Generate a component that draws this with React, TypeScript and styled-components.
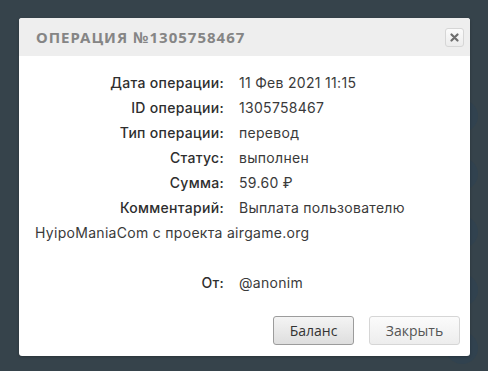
import React from 'react'
import styled, { createGlobalStyle } from 'styled-components'

const GlobalStyle = createGlobalStyle`
  html, body {
    margin: 0;
    padding: 0;
    background: #36434b;
  }
  body {
    width: 488px;
    height: 371px;
    overflow: hidden;
    font-family: Inter, 'Noto Sans', sans-serif;
  }
`

const Screen = styled.div`
  position: relative;
  width: 488px;
  height: 371px;
  padding: 18px 0 0 19px;
  box-sizing: border-box;
`

// faint page content behind the overlay
const Dots = styled.div`
  position: absolute;
  left: 446px;
  top: 100px;
  display: flex;
  flex-direction: column;
  gap: 26px;
`

const Dot = styled.div`
  width: 32px;
  height: 32px;
  border-radius: 50%;
  background: #31424f;
`

const Dialog = styled.div`
  position: relative;
  width: 451px;
  height: 338px;
  background: #ffffff;
  border-radius: 3px;
  overflow: hidden;
  display: flex;
  flex-direction: column;
  box-shadow: 0 1px 3px rgba(0, 0, 0, 0.25);
`

const Header = styled.div`
  height: 38px;
  background: #eeeeee;
  display: flex;
  align-items: center;
  justify-content: space-between;
  padding: 0 6px 0 17px;
`

const Title = styled.h2`
  margin: 0;
  font-family: 'Noto Sans', 'DejaVu Sans', sans-serif;
  font-size: 15px;
  font-weight: 700;
  letter-spacing: 1px;
  color: #858585;
`

const CloseButton = styled.button`
  width: 19px;
  height: 19px;
  padding: 0;
  border: 1px solid #d6d6d6;
  border-radius: 3px;
  background: linear-gradient(#fbfbfb, #ececec);
  display: flex;
  align-items: center;
  justify-content: center;
`

const Body = styled.div`
  flex: 1;
  padding: 14px 16px 0 16px;
  font-size: 14px;
  letter-spacing: 0.3px;
  color: #333333;
`

const Row = styled.div<{ $gap?: boolean }>`
  line-height: 25px;
  margin-top: ${p => (p.$gap ? '25px' : '0')};
`

const Label = styled.span`
  display: inline-block;
  width: 189px;
  margin-right: 15px;
  text-align: right;
  font-weight: 500;
  color: #2e2e2e;
`

const Value = styled.span`
  font-weight: 400;
  color: #3a3a3a;
`

const Footer = styled.div`
  display: flex;
  justify-content: flex-end;
  gap: 15px;
  padding: 0 10px 11px 0;
`

const Button = styled.button<{ $active?: boolean }>`
  height: 29px;
  padding: 0 14px;
  font-family: 'Open Sans', 'DejaVu Sans', sans-serif;
  font-size: 14px;
  border-radius: 3px;
  border: 1px solid ${p => (p.$active ? '#9c9c9c' : '#d6d6d6')};
  color: ${p => (p.$active ? '#333333' : '#555555')};
  background: ${p =>
    p.$active
      ? 'linear-gradient(#f4f4f4, #dedede)'
      : 'linear-gradient(#fbfbfb, #ededed)'};
  min-width: ${p => (p.$active ? '81px' : '91px')};
`

const rows: [string, React.ReactNode][] = [
  ['Дата операции:', '11 Фев 2021 11:15'],
  ['ID операции:', '1305758467'],
  ['Тип операции:', 'перевод'],
  ['Статус:', 'выполнен'],
  ['Сумма:', '59.60 ₽'],
  ['Комментарий:', 'Выплата пользователю HyipoManiaCom с проекта airgame.org'],
]

export default function App() {
  return (
    <>
      <GlobalStyle />
      <Screen>
        <Dots>
          <Dot />
          <Dot />
          <Dot />
          <Dot />
          <Dot />
        </Dots>
        <Dialog>
          <Header>
            <Title>ОПЕРАЦИЯ №1305758467</Title>
            <CloseButton aria-label="close">
              <svg width="9" height="9" viewBox="0 0 9 9">
                <path d="M1.5 1.5 L7.5 7.5 M7.5 1.5 L1.5 7.5" stroke="#6e6e6e" strokeWidth="2.2" strokeLinecap="round" />
              </svg>
            </CloseButton>
          </Header>
          <Body>
            {rows.map(([label, value]) => (
              <Row key={label}>
                <Label>{label}</Label>
                <Value>{value}</Value>
              </Row>
            ))}
            <Row $gap>
              <Label>От:</Label>
              <Value>@anonim</Value>
            </Row>
          </Body>
          <Footer>
            <Button $active>Баланс</Button>
            <Button>Закрыть</Button>
          </Footer>
        </Dialog>
      </Screen>
    </>
  )
}
